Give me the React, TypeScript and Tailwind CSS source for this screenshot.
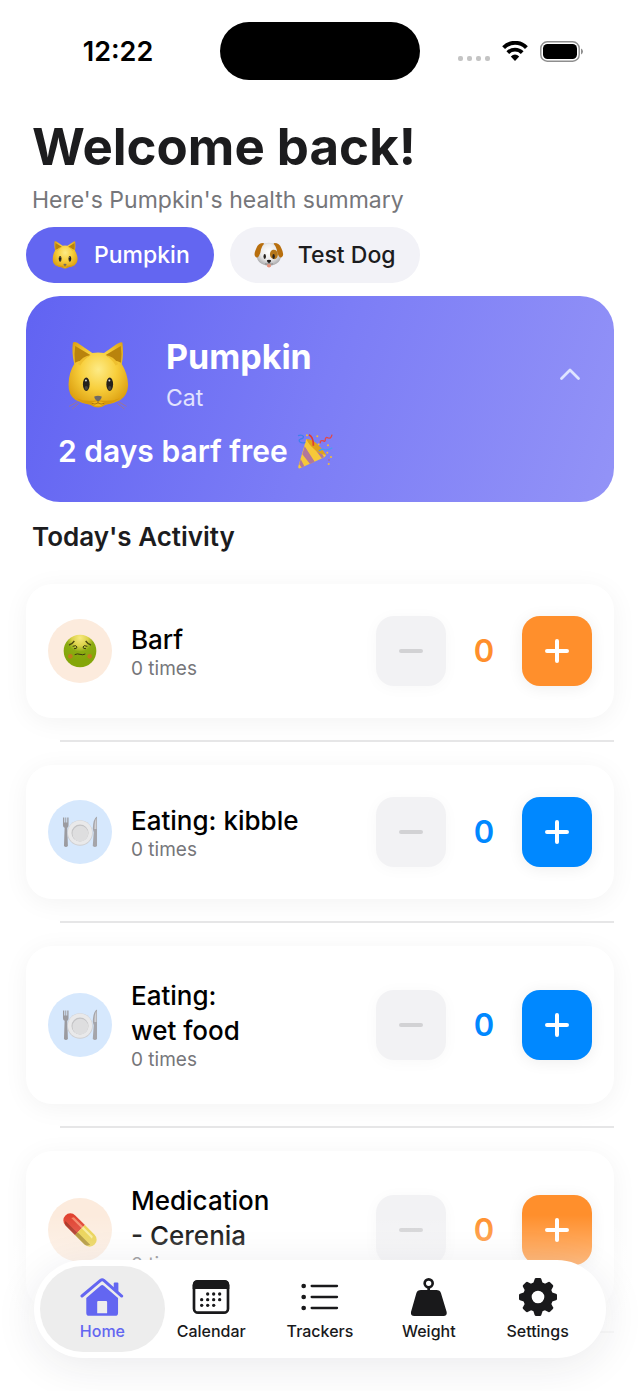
import React, { useState } from 'react';
import clsx from 'clsx';

type IconProps = { className?: string };

type Activity = {
  name: string;
  icon: React.FC<IconProps>;
  tint: string;
  text: string;
  button: string;
};

/* ---------- Emoji-style drawings ---------- */

const CatFace: React.FC<IconProps> = ({ className }) => (
  <svg viewBox="50 25 190 215" className={className} aria-hidden="true">
    <defs>
      <radialGradient id="catFur" cx="0.5" cy="0.42" r="0.6">
        <stop offset="0" stopColor="#fdeb86" />
        <stop offset="0.5" stopColor="#f8cf3c" />
        <stop offset="1" stopColor="#dc9f10" />
      </radialGradient>
    </defs>
    <path
      d="M70 36C76 31 84 37 92 42L128 67Q145 63 163 67L200 41Q215 31 218 36Q222 70 216 100Q234 130 235 162Q234 192 212 207Q190 219 168 221Q145 238 122 221Q100 219 78 207Q56 192 57 160Q58 125 74 100Q66 65 70 36Z"
      fill="url(#catFur)"
    />
    <path d="M77 46L122 73Q108 82 98 90Q86 90 76 96Q73 70 77 46Z" fill="#b9830d" />
    <path d="M213 46L168 73Q182 82 192 90Q204 90 214 96Q217 70 213 46Z" fill="#b9830d" />
    <path d="M84 100Q98 76 124 73Q104 84 92 104Z" fill="#efc02f" />
    <path d="M206 100Q192 76 166 73Q186 84 198 104Z" fill="#efc02f" />
    <path d="M80 202Q108 214 145 207Q182 214 210 202Q186 220 168 220Q145 236 122 220Q104 220 80 202Z" fill="#d99a0b" />
    <path d="M124 216Q145 206 166 216Q145 236 124 216Z" fill="#f0b51c" />
    <ellipse cx="110" cy="160" rx="10" ry="20" fill="#25211c" />
    <ellipse cx="180" cy="160" rx="10" ry="20" fill="#25211c" />
    <ellipse cx="110" cy="171" rx="5" ry="6" fill="#45423d" />
    <ellipse cx="180" cy="171" rx="5" ry="6" fill="#45423d" />
    <circle cx="109" cy="149" r="3" fill="#d8d8d8" />
    <circle cx="179" cy="149" r="3" fill="#d8d8d8" />
    <path d="M134 197Q145 192 156 197Q156 206 145 212Q134 206 134 197Z" fill="#6f6a66" />
    <path d="M145 211V216M145 216Q136 222 126 217M145 216Q154 222 164 217" fill="none" stroke="#8b5c0a" strokeWidth="2" />
    <path d="M84 212L59 226M88 217L68 234M206 212L230 226M202 217L224 234" stroke="#b07a6c" strokeWidth="2" />
  </svg>
);

const DogFace: React.FC<IconProps> = ({ className }) => (
  <svg viewBox="760 66 98 90" className={className} aria-hidden="true">
    <defs>
      <radialGradient id="dogFur" cx="0.5" cy="0.4" r="0.6">
        <stop offset="0" stopColor="#ffffff" />
        <stop offset="0.55" stopColor="#ececec" />
        <stop offset="1" stopColor="#a9a9ab" />
      </radialGradient>
    </defs>
    <path
      d="M783 76Q808 66 834 76Q846 92 848 118Q844 136 826 143Q809 150 792 143Q773 136 769 118Q771 92 783 76Z"
      fill="url(#dogFur)"
    />
    <path d="M790 72Q774 72 768 88Q759 106 763 114Q770 124 776 114Q782 104 783 92Q785 82 793 74Z" fill="#b86f0e" />
    <path d="M827 72Q843 72 849 88Q858 106 854 114Q847 124 841 114Q835 104 834 92Q832 82 824 74Z" fill="#b86f0e" />
    <path d="M822 94Q835 92 838 108Q838 124 826 125Q812 122 812 108Q813 96 822 94Z" fill="#b4761a" />
    <ellipse cx="795" cy="116" rx="4" ry="8" fill="#26221e" />
    <ellipse cx="824" cy="116" rx="4" ry="8" fill="#26221e" />
    <path d="M802 128Q809 125 816 128Q816 134 809 138Q802 134 802 128Z" fill="#1e1b1a" />
    <path d="M809 137Q804 143 796 140M809 137Q814 143 822 140" fill="none" stroke="#6b6460" strokeWidth="2" />
    <path d="M803 141H815V148Q809 156 803 148Z" fill="#e4907a" />
  </svg>
);

const PartyPopper: React.FC<IconProps> = ({ className }) => (
  <svg viewBox="880 636 114 112" className={className} aria-hidden="true">
    <path d="M911 656Q945 668 970 704Q968 710 962 712L892 744Q885 746 887 738Z" fill="#f6c83a" />
    <path d="M906 678L936 724L922 731L899 702ZM917 660L957 714L964 711Q948 676 922 660ZM894 716L905 738L897 742L890 732Z" fill="#b1779b" />
    <path d="M911 656Q940 656 970 704Q950 702 934 686Q916 670 911 656Z" fill="#e0a21b" />
    <path d="M886 646Q898 642 902 648Q904 654 894 656Q886 659 892 665Q898 670 908 666" fill="none" stroke="#3f7fee" strokeWidth="4" />
    <path d="M919 643Q933 650 932 676" fill="none" stroke="#df3d33" strokeWidth="5" />
    <path d="M953 669Q952 659 960 661Q969 666 968 656Q969 649 977 653Q985 656 988 643" fill="none" stroke="#df4a4c" strokeWidth="4" />
    <path d="M948 692Q958 684 966 688Q978 690 989 682" fill="none" stroke="#4a9bf2" strokeWidth="4" />
    <g fill="#f5bd34">
      <circle cx="913" cy="645" r="3" />
      <circle cx="944" cy="648" r="3" />
      <circle cx="948" cy="672" r="3" />
      <circle cx="976" cy="675" r="3" />
      <circle cx="974" cy="697" r="3" />
      <circle cx="985" cy="710" r="3" />
      <circle cx="978" cy="731" r="3" />
    </g>
    <circle cx="979" cy="719" r="2" fill="#df4a4c" />
    <circle cx="939" cy="662" r="2" fill="#4a9bf2" />
  </svg>
);

const SickFace: React.FC<IconProps> = ({ className }) => (
  <svg viewBox="184 187 108 108" className={className} aria-hidden="true">
    <defs>
      <radialGradient id="sickSkin" cx="0.5" cy="0.1" r="0.7">
        <stop offset="0" stopColor="#f8ea80" />
        <stop offset="0.35" stopColor="#dcd24a" />
        <stop offset="0.6" stopColor="#8bab12" />
        <stop offset="1" stopColor="#84a609" />
      </radialGradient>
    </defs>
    <circle cx="238" cy="241" r="49" fill="url(#sickSkin)" />
    <path d="M205 223Q214 221 221 211M271 223Q262 221 255 211" fill="none" stroke="#4c4a10" strokeWidth="4" />
    <path d="M216 227Q228 222 229 229Q229 235 220 234M260 227Q248 222 247 229Q247 235 256 234" fill="none" stroke="#3b3b10" strokeWidth="3" />
    <path d="M222 252Q230 248 238 251Q246 254 254 250" fill="none" stroke="#3b3b10" strokeWidth="3" />
    <circle cx="209" cy="257" r="7" fill="#c17b1c" />
    <circle cx="267" cy="257" r="7" fill="#c17b1c" />
  </svg>
);

const PlateSetting: React.FC<IconProps> = ({ className }) => (
  <svg viewBox="184 734 110 102" className={className} aria-hidden="true">
    <path d="M187 741H191V756H194V741H197V756H200V741H204V764Q204 770 200 772L202 828Q196 834 190 828L192 772Q187 770 187 764Z" fill="#9b9ba0" />
    <path d="M291 738Q279 744 278 776L281 786L278 828Q285 834 291 828Z" fill="#a5a5aa" />
    <path d="M289 742Q283 750 283 776H289Z" fill="#cfcfd3" />
    <circle cx="239" cy="788" r="39" fill="#cfcfd1" />
    <circle cx="239" cy="787" r="37" fill="#e9e9ea" />
    <circle cx="239" cy="788" r="26" fill="#c3c3c5" />
    <circle cx="240" cy="790" r="24" fill="#dededf" />
  </svg>
);

const Capsule: React.FC<IconProps> = ({ className }) => (
  <svg viewBox="124 214 108 108" className={className} aria-hidden="true">
    <g transform="rotate(45 178 268)">
      <path d="M178 247H137A21 21 0 0 0 137 289H178Z" fill="#e0412f" />
      <path d="M178 247H219A21 21 0 0 1 219 289H178Z" fill="#e9cf45" />
      <path d="M178 278H231Q226 289 217 289H178Z" fill="#a98a20" />
      <path d="M178 280H128Q132 289 139 289H178Z" fill="#a82d1c" />
      <path d="M138 254H178V261H134Z" fill="#f4896a" />
      <path d="M178 254H218L222 261H178Z" fill="#f7ea93" />
    </g>
  </svg>
);

/* ---------- Tab bar icons ---------- */

const HomeIcon: React.FC<IconProps> = ({ className }) => (
  <svg viewBox="182 411 133 120" className={className} fill="currentColor" aria-hidden="true">
    <path d="M188 468L244 421Q249 417 254 421L308 468" fill="none" stroke="currentColor" strokeWidth="9" strokeLinecap="round" strokeLinejoin="round" />
    <path d="M284 430Q284 427 287 427H295Q298 427 298 430V455L284 443Z" />
    <path fillRule="evenodd" d="M201 474L244 437Q249 433 254 437L297 474V519Q297 528 288 528H210Q201 528 201 519ZM234 486V520H264V486Q264 483 261 483H237Q234 483 234 486Z" />
  </svg>
);

const CalendarIcon: React.FC<IconProps> = ({ className }) => (
  <svg viewBox="516 411 118 120" className={className} fill="currentColor" aria-hidden="true">
    <rect x="524" y="424" width="102" height="94" rx="12" fill="none" stroke="currentColor" strokeWidth="8" />
    <path d="M520 447V436Q520 420 536 420H614Q630 420 630 436V447Z" />
    <circle cx="565" cy="462" r="5" />
    <circle cx="583" cy="462" r="5" />
    <circle cx="601" cy="462" r="5" />
    <circle cx="547" cy="479" r="5" />
    <circle cx="565" cy="479" r="5" />
    <circle cx="583" cy="479" r="5" />
    <circle cx="601" cy="479" r="5" />
    <circle cx="547" cy="496" r="5" />
    <circle cx="565" cy="496" r="5" />
    <circle cx="583" cy="496" r="5" />
  </svg>
);

const ListIcon: React.FC<IconProps> = ({ className }) => (
  <svg viewBox="844 411 118 120" className={className} fill="currentColor" aria-hidden="true">
    <circle cx="854" cy="438" r="7" />
    <circle cx="854" cy="471" r="7" />
    <circle cx="854" cy="504" r="7" />
    <path d="M878 438H954M878 471H954M878 504H954" stroke="currentColor" strokeWidth="7" strokeLinecap="round" />
  </svg>
);

const WeightIcon: React.FC<IconProps> = ({ className }) => (
  <svg viewBox="267 411 120 120" className={className} fill="currentColor" aria-hidden="true">
    <circle cx="326" cy="430" r="12" fill="none" stroke="currentColor" strokeWidth="8" />
    <path d="M322 443H330V450H349Q360 450 363 460L380 516Q382 528 370 528H283Q271 528 273 516L289 460Q292 450 303 450H322Z" />
  </svg>
);

const GearIcon: React.FC<IconProps> = ({ className }) => (
  <svg viewBox="-60 -60 120 120" className={className} aria-hidden="true">
    <circle r="32" fill="none" stroke="currentColor" strokeWidth="26" />
    {[0, 45, 90, 135, 180, 225, 270, 315].map((angle) => (
      <path
        key={angle}
        d="M-15 -38L-10 -54Q-9 -57 -6 -57H6Q9 -57 10 -54L15 -38Z"
        fill="currentColor"
        transform={`rotate(${angle})`}
      />
    ))}
  </svg>
);

/* ---------- Data ---------- */

const pets = [
  { name: 'Pumpkin', icon: CatFace },
  { name: 'Test Dog', icon: DogFace },
];

const orange = { tint: 'bg-[#fcebdd]', text: 'text-[#ff8f2c]', button: 'bg-[#ff8f2c]' };
const blue = { tint: 'bg-[#d6e8fd]', text: 'text-[#0088ff]', button: 'bg-[#0088ff]' };

const activities: Activity[] = [
  { name: 'Barf', icon: SickFace, ...orange },
  { name: 'Eating: kibble', icon: PlateSetting, ...blue },
  { name: 'Eating:\nwet food', icon: PlateSetting, ...blue },
  { name: 'Medication\n- Cerenia', icon: Capsule, ...orange },
];

const tabs = [
  { label: 'Home', icon: HomeIcon },
  { label: 'Calendar', icon: CalendarIcon },
  { label: 'Trackers', icon: ListIcon },
  { label: 'Weight', icon: WeightIcon },
  { label: 'Settings', icon: GearIcon },
];

/* ---------- Sections ---------- */

const StatusBar: React.FC = () => (
  <div className="grid grid-cols-[1fr_200px_1fr] items-center pt-[22px]">
    <div className="pt-0.5 pl-4 text-center text-[27px] leading-8 font-semibold text-black">12:22</div>
    <div className="h-[58px] rounded-full bg-black" />
    <div className="flex items-center justify-center gap-3 pr-5">
      <div className="flex gap-1 pt-[14px]">
        {[0, 1, 2, 3].map((dot) => (
          <span key={dot} className="size-[5px] rounded-[2px] bg-[#c4c4c4]" />
        ))}
      </div>
      <svg viewBox="0 0 26 20" className="h-5 w-[26px]" aria-hidden="true">
        <path d="M1.6 6.6A16 16 0 0 1 24.4 6.6" fill="none" stroke="#000" strokeWidth="4" />
        <path d="M5.8 11.6A10 10 0 0 1 20.2 11.6" fill="none" stroke="#000" strokeWidth="3.8" />
        <path d="M13 20L8.8 15.6Q13 11.6 17.2 15.6Z" fill="#000" />
      </svg>
      <svg viewBox="0 0 43 21" className="h-[21px] w-[43px]" aria-hidden="true">
        <rect x="0.8" y="0.8" width="38.4" height="19.4" rx="6.5" fill="none" stroke="#8e8e8e" strokeWidth="1.4" />
        <rect x="3" y="3" width="34" height="15" rx="4.5" fill="#000" />
        <path d="M41 7.5Q43 8.5 43 10.5Q43 12.5 41 13.5Z" fill="#8e8e8e" />
      </svg>
    </div>
  </div>
);

const ActivityCard: React.FC<{ activity: Activity }> = ({ activity }) => {
  const [count, setCount] = useState(0);
  const Icon = activity.icon;

  return (
    <div className="flex items-center rounded-[26px] bg-white px-[22px] py-8 shadow-[0_4px_26px_rgba(0,0,0,0.05)]">
      <div className={clsx('flex size-16 shrink-0 items-center justify-center rounded-full', activity.tint)}>
        <Icon className="size-9" />
      </div>
      <div className="ml-[19px] flex-1">
        <h3 className="text-[26px] leading-[35px] font-medium whitespace-pre-line text-black">{activity.name}</h3>
        <p className="text-[19px] leading-6 text-[#76767a]">{count} times</p>
      </div>
      <button
        type="button"
        aria-label="Decrease"
        disabled={count === 0}
        onClick={() => setCount(count - 1)}
        className="flex size-[70px] items-center justify-center rounded-[18px] bg-[#f2f2f4] shadow-[0_2px_16px_rgba(0,0,0,0.03)]"
      >
        <span className="h-1 w-6 rounded-full bg-[#d2d2d4]" />
      </button>
      <span className={clsx('w-[76px] text-center text-[31px] leading-10 font-semibold', activity.text)}>{count}</span>
      <button
        type="button"
        aria-label="Increase"
        onClick={() => setCount(count + 1)}
        className={clsx('flex size-[70px] items-center justify-center rounded-[18px] shadow-[0_2px_16px_rgba(0,0,0,0.07)]', activity.button)}
      >
        <svg viewBox="0 0 24 24" className="size-6" aria-hidden="true">
          <path d="M12 2V22M2 12H22" stroke="#fff" strokeWidth="4" strokeLinecap="round" />
        </svg>
      </button>
    </div>
  );
};

const TabBar: React.FC = () => {
  const [active, setActive] = useState('Home');

  return (
    <nav className="absolute inset-x-[34px] bottom-[33px] grid grid-cols-5 rounded-full bg-white px-[14px] py-[6px] shadow-[0_8px_44px_rgba(30,30,60,0.09)]">
      {tabs.map(({ label, icon: Icon }) => (
        <button
          key={label}
          type="button"
          onClick={() => setActive(label)}
          className={clsx(
            '-mx-2 flex h-[86px] flex-col items-center rounded-full pt-[11px]',
            active === label ? 'bg-[#ededed] text-[#6366f1]' : 'text-[#19191b]'
          )}
        >
          <Icon className="h-10 w-11" />
          <span className="mt-1 text-base leading-5 font-medium">{label}</span>
        </button>
      ))}
    </nav>
  );
};

const App: React.FC = () => {
  const [pet, setPet] = useState('Pumpkin');

  return (
    <div className="relative h-screen overflow-hidden bg-white font-['Inter','Liberation_Sans',sans-serif] text-[#1c1c1e]">
      <StatusBar />

      <main className="px-[26px] pt-9">
        <header className="px-[6px]">
          <h1 className="text-[51px] leading-[62px] font-bold">Welcome back!</h1>
          <p className="mt-[7px] text-[23px] leading-[30px] text-[#76767a]">Here's Pumpkin's health summary</p>
        </header>

        <div className="mt-3 flex gap-4">
          {pets.map(({ name, icon: Icon }) => (
            <button
              key={name}
              type="button"
              onClick={() => setPet(name)}
              className={clsx(
                'flex h-14 items-center gap-[14px] rounded-full px-6 text-[23px] font-medium',
                pet === name ? 'bg-[#6366f1] text-white' : 'bg-[#f2f2f7]'
              )}
            >
              <Icon className="size-[30px]" />
              {name}
            </button>
          ))}
        </div>

        <section className="mt-[13px] rounded-[34px] bg-linear-[108deg] from-[#6163f2] via-[#7c7df6] to-[#9393f7] px-8 pt-10 pb-8 text-white">
          <div className="flex items-center">
            <CatFace className="h-[72px] w-20" />
            <div className="ml-7 flex-1">
              <h2 className="text-[34px] leading-[42px] font-bold">Pumpkin</h2>
              <p className="mt-[5px] text-[23px] leading-[30px] text-white/80">Cat</p>
            </div>
            <button type="button" aria-label="Collapse">
              <svg viewBox="0 0 24 24" className="size-6" fill="none" aria-hidden="true">
                <path d="M3.5 15.5L12 7L20.5 15.5" stroke="#dfe4ff" strokeWidth="2.8" strokeLinecap="round" strokeLinejoin="round" />
              </svg>
            </button>
          </div>
          <p className="mt-[19px] flex items-center gap-2 text-[30px] leading-[38px] font-semibold">
            2 days barf free
            <PartyPopper className="size-[38px]" />
          </p>
        </section>

        <h2 className="mt-[17px] mb-[29px] px-[6px] text-[26px] leading-9 font-semibold">Today's Activity</h2>

        {activities.map((activity) => (
          <React.Fragment key={activity.name}>
            <ActivityCard activity={activity} />
            <div className="mt-[22px] mb-[23px] ml-[34px] h-0.5 bg-[#e6e6e7]" />
          </React.Fragment>
        ))}
      </main>

      {/* Content fades out behind the tab bar */}
      <div className="pointer-events-none absolute inset-x-0 bottom-0 h-44 bg-linear-to-b from-white/0 via-white/70 to-white/90" />
      <TabBar />
    </div>
  );
};

export default App;
